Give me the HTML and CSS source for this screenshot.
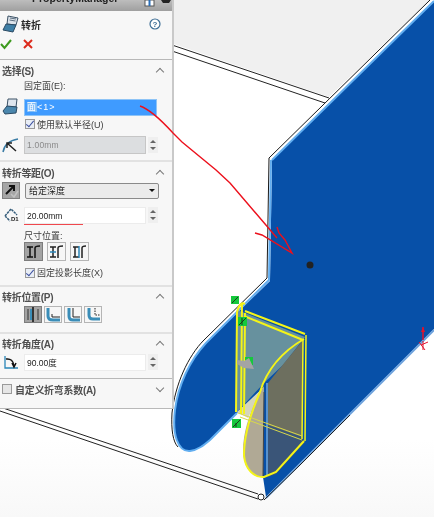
FILE: index.html
```html
<!DOCTYPE html>
<html lang="zh">
<head>
    <meta charset="UTF-8">
    <meta name="viewport" content="width=device-width, initial-scale=1.0">
    <title>转折 - PropertyManager</title>
    <link rel="stylesheet" href="styles.css">
</head>
<body>
    <!-- 3D view: free canvas behind the panel -->
    <svg class="canvas" viewBox="0 0 434 517" xmlns="http://www.w3.org/2000/svg">
        <polygon points="174,0 430,0 329,97 174,44" fill="#f0f0f0"/>
        <!-- top and bottom double edges -->
        <path d="M172 45 L329 98 M172 51 L325 103" stroke="#222" fill="none"/>
        <path d="M0 407 L258 494 M0 411 L258 499" stroke="#222" fill="none"/>
        <!-- blue plate -->
        <path d="M272 160 L434 1 L434 329 L266 497 L263 477 L263 388 L237 413 L210 440 C204 445 198 450 190 451 C178 452 172 435 175 410 C178 385 190 360 206 343 L270 281 Z" fill="#0750a8"/>
        <path d="M272 160 L434 1 M271 160 L269 280 L206 343 C190 360 178 385 175 410 C172 435 178 452 190 451 C198 450 204 445 210 440 L237 413" fill="none" stroke="#62aef0" stroke-width="2"/>
        <path d="M434 330 L266 498" fill="none" stroke="#6ea2dc" stroke-width="2"/>
        <path d="M269 158 L430 0 M269 158 L267 278 L204 340 C188 356 175 385 172 413 C171 430 173 442 178 447" fill="none" stroke="#1a1a1a"/>
        <path d="M350 415 L300 465 L264 500" fill="none" stroke="#222"/>
        <!-- translucent preview of the jog -->
        <polygon points="237,310 245,313 305,337 283,365 265,382 237,412" fill="#67919e"/>
        <polygon points="303,340 285,362 268,383 268,426 302,437" fill="#6d6f5f"/>
        <polygon points="268,425 302,437 305,442 276,474 268,477" fill="#3a5578"/>
        <polygon points="237,412 263,388 248,418" fill="#d5d5bb"/>
        <path d="M264 386 C252 405 243 430 243 450 C243 468 252 477 263 477 Z" fill="#b0a995"/>
        <path d="M264 392 L263 477" stroke="#444" fill="none"/>
        <path d="M267 383 L267 476" stroke="#76a8d8" stroke-width="1.5" fill="none"/>
        <path d="M237 312 L236 412 M242 303 L241 414 M245 313 L244 414" stroke="#f4f418" stroke-width="2" fill="none"/>
        <path d="M237 312 Q240 301 245 304 M245 311 L305 334 M244 316 L303 340" stroke="#f4f418" stroke-width="2" fill="none"/>
        <path d="M304 339 C285 350 268 366 260 392 C250 415 244 435 244 455 C245 470 255 478 264 477 L276 472 L304 441" stroke="#f4f418" stroke-width="2" fill="none"/>
        <path d="M306 335 L305 441 M303 340 L302 439" stroke="#f4f418" stroke-width="1.5" fill="none"/>
        <path d="M238 413 L302 436 M240 417 L302 440" stroke="#d8d84a" fill="none"/>
        <!-- green handles -->
        <g fill="#15c83c">
            <rect x="231" y="296" width="8" height="8"/>
            <rect x="238" y="317" width="9" height="9"/>
            <rect x="245" y="357" width="8" height="8"/>
            <rect x="232" y="419" width="9" height="9"/>
        </g>
        <path d="M232 303 L238 297 M239 325 L246 318 M233 427 L240 420 M236 423 V427 M242 318 V325" stroke="#1b3a1b" fill="none"/>
        <polygon points="249,358 254,369 244,368 237,364 237,360 244,361" fill="#a4a4a4"/>
        <!-- corner and pin -->
        <circle cx="261" cy="497" r="3" fill="#fff" stroke="#222"/>
        <circle cx="310" cy="265" r="3.5" fill="#222"/>
    </svg>

    <aside class="panel">
        <div class="title-bar">
            <span class="title-text">PropertyManager</span>
            <svg class="title-icons" viewBox="0 0 28 11"><rect x="1" y="0" width="9" height="6" fill="#fff" stroke="#555"/><path d="M5.500 0 V6" stroke="#2a6fb8" stroke-width="2"/><path d="M17 0 H27 L25 3 H19 Z" fill="#222"/></svg>
        </div>

        <div class="head">
            <svg class="icon-lg" viewBox="0 0 18 18"><path d="M6 1 L16 3 L14 10 L5 9Z" fill="#dce3ea" stroke="#3c5266"/><path d="M8 3 L14 4 M7.500 5 L13.500 6" stroke="#3c5266" stroke-width="0.8"/><path d="M1 15 L4 9 L14 10 L11 17 Z" fill="#3f7fa6" stroke="#2b4a63"/></svg>
            <span class="head-title">转折</span>
            <svg class="help" viewBox="0 0 12 12"><circle cx="6" cy="6" r="5" fill="#fff" stroke="#3f6f96" stroke-width="1.2"/><text x="6" y="9" text-anchor="middle">?</text></svg>
        </div>
        <div class="actions">
            <svg class="icon-sm" viewBox="0 0 12 12"><path d="M1 6 L4.500 10 L11 2" fill="none" stroke="#3d9a1e" stroke-width="2"/></svg>
            <svg class="icon-sm" viewBox="0 0 12 12"><path d="M2 2 L10 10 M10 2 L2 10" fill="none" stroke="#dc2a1c" stroke-width="2"/></svg>
        </div>

        <section class="group group-select">
            <div class="group-head"><span>选择(S)</span><i class="chev"></i></div>
            <div class="label">固定面(E):</div>
            <div class="row row-face">
                <svg class="icon-lg" viewBox="0 0 18 18"><path d="M6 1 L15 1 L14 9 L5 9Z" fill="#dfe6ee" stroke="#3c5266"/><path d="M1 13 L5 8 L15 9 L14 15 L3 16Z" fill="#4b87ad" stroke="#2b4a63"/></svg>
                <div class="face-field"><span class="face-sel">面</span>&lt;1&gt;</div>
            </div>
            <label class="check"><i class="box"></i>使用默认半径(U)</label>
            <div class="row row-radius">
                <svg class="icon-lg" viewBox="0 0 18 18"><path d="M1 16 Q3 5 16 3" fill="none" stroke="#3a7ca5" stroke-width="1.5"/><path d="M14 15 L5 7 M5 12 L5 7 L10 7" fill="none" stroke="#222" stroke-width="1.5"/></svg>
                <div class="input input-off">1.00mm</div>
                <div class="spin"></div>
            </div>
        </section>

        <section class="group group-offset">
            <div class="group-head"><span>转折等距(O)</span><i class="chev"></i></div>
            <div class="row">
                <div class="mode-btn"><svg viewBox="0 0 16 15"><path d="M8 11 L11 14 L15 8" fill="none" stroke="#c2c2c2" stroke-width="1.5"/><path d="M3 11 L11 3 M6 3 L11 3 L11 8" fill="none" stroke="#111" stroke-width="2"/></svg></div>
                <div class="select"><span>给定深度</span><i class="caret"></i></div>
            </div>
            <div class="row row-depth">
                <svg class="icon-lg" viewBox="0 0 18 18"><path d="M3 10 L9 3 L15 9 M3 10 L8 15" fill="none" stroke="#345c7a" stroke-width="1.5" stroke-dasharray="2.500 0.800"/><text x="9" y="15" class="d1">D1</text></svg>
                <div class="input input-depth">20.00mm</div>
                <div class="spin"></div>
            </div>
            <div class="label label-pos">尺寸位置:</div>
            <div class="tools">
                <div class="tool tool-on"><svg viewBox="0 0 17 17"><path d="M2 4 H8 M2 14 H8 M5 4 V14 M10 15 V5 Q10 3 15 3" fill="none" stroke="#111" stroke-width="1.5"/></svg></div>
                <div class="tool"><svg viewBox="0 0 17 17"><path d="M2 4 H8 M2 14 H8 M5 4 V14 M10 15 V5 Q10 3 15 3" fill="none" stroke="#222" stroke-width="1.5"/><path d="M2 9 H8" stroke="#2a86b8" stroke-width="1.5"/></svg></div>
                <div class="tool"><svg viewBox="0 0 17 17"><path d="M2 4 H8 M2 14 H8 M4 4 V14 M11 15 V5 Q11 3 15 3" fill="none" stroke="#222" stroke-width="1.5"/><path d="M8 3 V15" stroke="#2a86b8" stroke-width="1.5"/></svg></div>
            </div>
            <label class="check check-fixed"><i class="box"></i>固定投影长度(X)</label>
        </section>

        <section class="group group-bend">
            <div class="group-head group-head-sm"><span>转折位置(P)</span><i class="chev"></i></div>
            <div class="tools tools-bend">
                <div class="tool tool-on"><svg viewBox="0 0 16 15"><path d="M8 0 V15" stroke="#111" stroke-width="1.5"/><path d="M3 2 V13 M13 2 V13" stroke="#333"/><rect x="5" y="2" width="2" height="11" fill="#3a8db8"/></svg></div>
                <div class="tool"><svg viewBox="0 0 16 15"><path d="M3 1 V9 Q3 13 8 13 H15" fill="none" stroke="#3a8db8" stroke-width="3"/><path d="M7 7 V10 H15" fill="none" stroke="#222"/></svg></div>
                <div class="tool"><svg viewBox="0 0 16 15"><path d="M4 1 V9 Q4 13 8 13 H15" fill="none" stroke="#3a8db8" stroke-width="3"/><path d="M8 1 V10 H15" fill="none" stroke="#222"/></svg></div>
                <div class="tool"><svg viewBox="0 0 16 15"><path d="M4 1 V8 Q4 12 8 12 H15" fill="none" stroke="#3a8db8" stroke-width="3"/><path d="M10 1 V8 H15" fill="none" stroke="#222" stroke-dasharray="1.500 1"/></svg></div>
            </div>
        </section>

        <section class="group group-angle">
            <div class="group-head group-head-sm"><span>转折角度(A)</span><i class="chev"></i></div>
            <div class="row">
                <svg class="icon-lg" viewBox="0 0 18 18"><path d="M3 3 V15 H16" fill="none" stroke="#2a86b8" stroke-width="1.3"/><path d="M4 6 Q11 5 12 13 M10 10 L12 14 L14 10" fill="none" stroke="#111" stroke-width="1.5"/></svg>
                <div class="input">90.00度</div>
                <div class="spin"></div>
            </div>
        </section>

        <section class="group-custom">
            <div class="group-head"><span class="head-check"><i class="box box-empty"></i>自定义折弯系数(A)</span><i class="chev chev-down"></i></div>
        </section>
    </aside>

    <!-- red hand drawn marks lie over the panel too -->
    <svg class="canvas canvas-top" viewBox="0 0 434 517" xmlns="http://www.w3.org/2000/svg">
        <path d="M140 106 Q152 110 173 133 L182 142 L216 170 L230 183 L277 238 M255 233 L262 235 L292 253 L285 240 L279 233 L277 227" stroke="#ec101c" stroke-width="1.4" fill="none"/>
        <path d="M423 327 V340" stroke="#e2122c" stroke-width="1.5" fill="none"/>
        <path d="M421 332 L423 327 L425 332 Z" fill="#e2122c"/>
        <path d="M419 342 L425 350 M423 341 V350 M421 345 L428 342" stroke="#e2122c" fill="none"/>
    </svg>
</body>
</html>
```

FILE: styles.css
```css
* {
    margin: 0;
    padding: 0;
    box-sizing: border-box;
}

body {
    position: relative;
    width: 434px;
    height: 517px;
    overflow: hidden;
    background: linear-gradient(#ffffff 85%, #f8f8f8);
    color: #3c3c3c;
    font-family: "Liberation Sans", "Noto Sans CJK SC", sans-serif;
    font-size: 9px;
}

.canvas {
    position: absolute;
    left: 0;
    top: 0;
    width: 434px;
    height: 517px;
    filter: blur(0.3px);
}

.canvas-top {
    pointer-events: none;
}

.panel {
    position: relative;
    width: 174px;
    height: 409px;
    background-color: #f7f7f7;
    border-right: 2px solid #c9c9c9;
    border-bottom: 1px solid #b9b9b9;
    filter: blur(0.35px);
}

.title-bar {
    position: relative;
    height: 11px;
    overflow: hidden;
    background: linear-gradient(#bdbdbd, #9f9f9f);
}

.title-text {
    position: absolute;
    left: 32px;
    top: -8px;
    font-size: 10.5px;
    font-weight: bold;
    color: #222222;
}

.title-icons {
    position: absolute;
    right: 0;
    top: 0;
    width: 28px;
    height: 11px;
}

.head {
    display: flex;
    align-items: center;
    height: 26px;
    padding: 0 11px 0 2px;
}

.head-title {
    flex: 1;
    margin-left: 1px;
    font-size: 10px;
    font-weight: bold;
    color: #2c2c2c;
}

.help {
    width: 12px;
    height: 12px;
}

.help text {
    font-size: 8px;
    font-weight: bold;
    fill: #3f6f96;
}

.icon-lg {
    flex: none;
    width: 18px;
    height: 18px;
}

.actions {
    display: flex;
    gap: 10px;
    height: 23px;
    border-bottom: 1px solid #b8b8b8;
}

.icon-sm {
    width: 12px;
    height: 12px;
    margin-top: 1px;
}

/* each group ends on its own divider */
.group {
    padding: 0 8px 0 2px;
    border-bottom: 2px solid #e2e2e2;
}

.group-select {
    height: 102px;
}

.group-offset {
    height: 125px;
}

.group-bend {
    height: 47px;
}

.group-angle {
    height: 45px;
    border-bottom: 1px solid #b8b8b8;
}

.group-custom {
    padding: 0 8px 0 2px;
}

.group-head {
    display: flex;
    justify-content: space-between;
    align-items: center;
    height: 20px;
    font-size: 10px;
    font-weight: bold;
    letter-spacing: -0.3px;
    color: #505050;
}

.group-head-sm {
    height: 19px;
}

.chev {
    width: 6px;
    height: 6px;
    margin: 3px 1px 0 0;
    border-left: 1.5px solid #7a7a7a;
    border-top: 1.5px solid #7a7a7a;
    transform: rotate(45deg);
}

.chev-down {
    margin-top: -3px;
    transform: rotate(225deg);
}

.label {
    height: 12px;
    padding-left: 22px;
    line-height: 12px;
}

.label-pos {
    margin-top: 6px;
}

.row {
    display: flex;
    align-items: center;
    gap: 4px;
}

.row-face {
    margin-top: 6px;
}

.row-radius {
    margin-top: 4px;
}

.row-depth {
    margin-top: 7px;
}

.face-field {
    width: 133px;
    height: 17px;
    padding-left: 2px;
    line-height: 15px;
    background-color: #3f9bff;
    border: 1px solid #8ec4f6;
    color: #ffffff;
    letter-spacing: 1px;
}

.face-sel {
    background-color: #7fbdf8;
}

.check {
    display: flex;
    align-items: center;
    gap: 2px;
    height: 16px;
    margin-left: 23px;
}

.check-fixed {
    height: 17px;
    margin-top: 3px;
}

.box {
    position: relative;
    display: block;
    width: 10px;
    height: 10px;
    background-color: #e8edf5;
    border: 1px solid #9a9a9a;
}

.box::after {
    content: "";
    position: absolute;
    left: 2px;
    top: -1px;
    width: 3px;
    height: 7px;
    border-right: 1.5px solid #3b4fa0;
    border-bottom: 1.5px solid #3b4fa0;
    transform: rotate(40deg);
}

.box-empty {
    margin-right: 3px;
    background-color: #e6e6e6;
}

.box-empty::after {
    display: none;
}

.head-check {
    display: flex;
    align-items: center;
}

.input {
    width: 122px;
    height: 17px;
    margin-right: -2px;
    padding-left: 2px;
    line-height: 16px;
    background-color: #ffffff;
    border: 1px solid #ececec;
    font-size: 8.5px;
    color: #222222;
}

.input-off {
    height: 18px;
    background-color: #dcdee0;
    border-color: #c6c6c6;
    color: #8a8a8a;
    letter-spacing: 0.2px;
}

.input-depth {
    position: relative;
}

.input-depth::after {
    content: "";
    position: absolute;
    left: -1px;
    top: 16px;
    width: 59px;
    height: 1px;
    background-color: #f0484e;
}

.spin {
    position: relative;
    width: 10px;
    height: 16px;
    background-color: #efefef;
}

.spin::before,
.spin::after {
    content: "";
    position: absolute;
    left: 2px;
    border-left: 3px solid transparent;
    border-right: 3px solid transparent;
}

.spin::before {
    top: 3px;
    border-bottom: 3px solid #666666;
}

.spin::after {
    bottom: 3px;
    border-top: 3px solid #666666;
}

.mode-btn {
    width: 18px;
    height: 17px;
    background-color: #a5a5a5;
    border: 1px solid #808080;
}

.mode-btn svg {
    display: block;
    width: 16px;
    height: 15px;
}

.select {
    display: flex;
    justify-content: space-between;
    align-items: center;
    width: 134px;
    height: 16px;
    margin-left: 1px;
    padding: 0 3px;
    background-color: #ebebeb;
    border: 1px solid #8a8a8a;
    border-radius: 2px;
    color: #222222;
}

.caret {
    border-left: 3px solid transparent;
    border-right: 3px solid transparent;
    border-top: 3px solid #111111;
}

.d1 {
    font-size: 6px;
    font-weight: bold;
    fill: #222222;
}

.tools {
    display: flex;
    gap: 4px;
    margin-left: 22px;
}

.tools-bend {
    gap: 2px;
}

.tool {
    width: 19px;
    height: 19px;
    background-color: #f6f6f6;
    border: 1px solid #b5b5b5;
}

.tools-bend .tool {
    width: 18px;
    height: 17px;
}

.tool svg {
    display: block;
    width: 100%;
    height: 100%;
}

.tool-on {
    background-color: #a3a3a3;
    border-color: #7d7d7d;
}
```
